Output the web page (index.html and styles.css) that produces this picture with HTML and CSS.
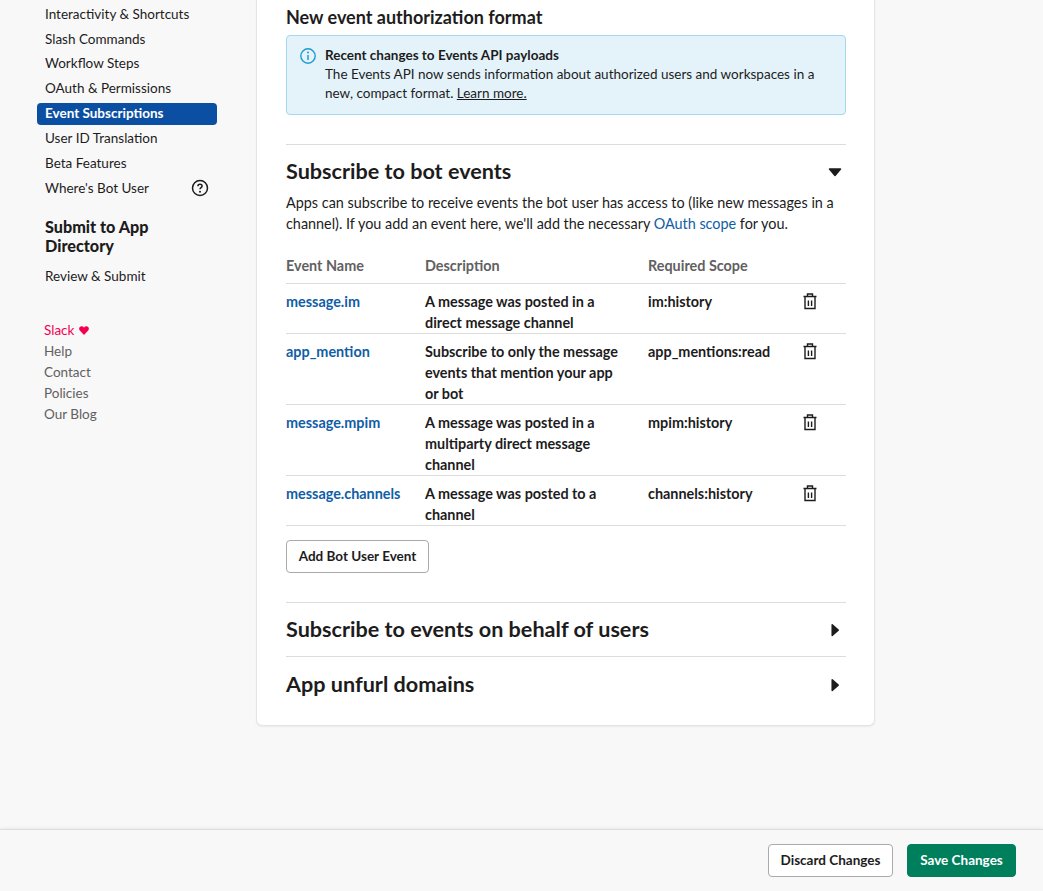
FILE: index.html
```html
<!DOCTYPE html>
<html lang="en">
<head>
  <meta charset="UTF-8" />
  <meta name="viewport" content="width=device-width, initial-scale=1.0" />
  <title>Event Subscriptions</title>
  <link rel="stylesheet" href="styles.css">
</head>
<body>
  <div class="page">
    <nav class="sidebar">
      <ul class="nav_list">
        <li><a href="#">Interactivity &amp; Shortcuts</a></li>
        <li><a href="#">Slash Commands</a></li>
        <li><a href="#">Workflow Steps</a></li>
        <li><a href="#">OAuth &amp; Permissions</a></li>
        <li><a href="#" class="active">Event Subscriptions</a></li>
        <li><a href="#">User ID Translation</a></li>
        <li><a href="#">Beta Features</a></li>
        <li>
          <a href="#" class="with_icon">Where's Bot User
            <svg class="help_icon" width="18" height="18" viewBox="0 0 18 18" fill="none" stroke="#1d1c1d">
              <circle cx="9" cy="9" r="7.5" stroke-width="1.5"/>
              <path d="M6.9 7.2C6.9 6 7.8 5.3 9 5.3s2.1.7 2.1 1.8c0 1.6-2.1 1.6-2.1 3.2" stroke-width="1.5"/>
              <circle cx="9" cy="12.7" r="1" fill="#1d1c1d" stroke="none"/>
            </svg>
          </a>
        </li>
      </ul>
      <h4 class="nav_title">Submit to App Directory</h4>
      <ul class="nav_list">
        <li><a href="#">Review &amp; Submit</a></li>
      </ul>
      <ul class="foot_links">
        <li class="slack_love">Slack
          <svg class="heart" width="10" height="9" viewBox="0 0 10 9"><path d="M5 9 .8 4.6C-.6 3 .3.3 2.6.3 3.7.3 4.5.9 5 1.7 5.5.9 6.3.3 7.4.3c2.3 0 3.2 2.7 1.8 4.3z"/></svg>
        </li>
        <li><a href="#">Help</a></li>
        <li><a href="#">Contact</a></li>
        <li><a href="#">Policies</a></li>
        <li><a href="#">Our Blog</a></li>
      </ul>
    </nav>

    <main class="card">
      <h3 class="format_title">New event authorization format</h3>
      <div class="callout">
        <svg class="info_icon" width="18" height="18" viewBox="0 0 18 18" fill="none" stroke="#1d9bd1">
          <circle cx="9" cy="9" r="7.2" stroke-width="1.4"/>
          <path d="M9 8v5" stroke-width="1.5"/>
          <circle cx="9" cy="5.4" r="1" fill="#1d9bd1" stroke="none"/>
        </svg>
        <div>
          <strong>Recent changes to Events API payloads</strong><br>
          The Events API now sends information about authorized users and workspaces in a new, compact format. <a href="#">Learn more.</a>
        </div>
      </div>

      <section class="section open">
        <div class="section_head">
          <h2>Subscribe to bot events</h2>
          <svg class="caret" width="14" height="10" viewBox="0 0 14 10"><path d="M1.5 2h11L7 8.5z"/></svg>
        </div>
        <p class="intro">Apps can subscribe to receive events the bot user has access to (like new messages in a channel). If you add an event here, we'll add the necessary <a href="#">OAuth scope</a> for you.</p>

        <table class="events">
          <thead>
            <tr>
              <th class="col_name">Event Name</th>
              <th class="col_desc">Description</th>
              <th class="col_scope">Required Scope</th>
              <th></th>
            </tr>
          </thead>
          <tbody>
            <tr>
              <td><a href="#">message.im</a></td>
              <td>A message was posted in a direct message channel</td>
              <td>im:history</td>
              <td><svg class="trash" width="14" height="17" viewBox="0 0 14 17" fill="none" stroke="#1d1c1d" stroke-width="1.4"><path d="M4.5 3V1h5v2M.5 3.5h13M2 3.5v12h10v-12M5.4 7.5V13M8.6 7.5V13"/></svg></td>
            </tr>
            <tr>
              <td><a href="#">app_mention</a></td>
              <td>Subscribe to only the message events that mention your app or bot</td>
              <td>app_mentions:read</td>
              <td><svg class="trash" width="14" height="17" viewBox="0 0 14 17" fill="none" stroke="#1d1c1d" stroke-width="1.4"><path d="M4.5 3V1h5v2M.5 3.5h13M2 3.5v12h10v-12M5.4 7.5V13M8.6 7.5V13"/></svg></td>
            </tr>
            <tr>
              <td><a href="#">message.mpim</a></td>
              <td>A message was posted in a multiparty direct message channel</td>
              <td>mpim:history</td>
              <td><svg class="trash" width="14" height="17" viewBox="0 0 14 17" fill="none" stroke="#1d1c1d" stroke-width="1.4"><path d="M4.5 3V1h5v2M.5 3.5h13M2 3.5v12h10v-12M5.4 7.5V13M8.6 7.5V13"/></svg></td>
            </tr>
            <tr>
              <td><a href="#">message.channels</a></td>
              <td>A message was posted to a channel</td>
              <td>channels:history</td>
              <td><svg class="trash" width="14" height="17" viewBox="0 0 14 17" fill="none" stroke="#1d1c1d" stroke-width="1.4"><path d="M4.5 3V1h5v2M.5 3.5h13M2 3.5v12h10v-12M5.4 7.5V13M8.6 7.5V13"/></svg></td>
            </tr>
          </tbody>
        </table>
        <button class="btn add_btn">Add Bot User Event</button>
      </section>

      <section class="section closed">
        <div class="section_head">
          <h2>Subscribe to events on behalf of users</h2>
          <svg class="caret" width="14" height="14" viewBox="0 0 14 14"><path d="M4.2 1.8v10.6l6-5.3z"/></svg>
        </div>
      </section>
      <section class="section closed last">
        <div class="section_head">
          <h2>App unfurl domains</h2>
          <svg class="caret" width="14" height="14" viewBox="0 0 14 14"><path d="M4.2 1.8v10.6l6-5.3z"/></svg>
        </div>
      </section>
    </main>
  </div>

  <footer class="save_bar">
    <button class="btn discard_btn">Discard Changes</button>
    <button class="btn save_btn">Save Changes</button>
  </footer>
</body>
</html>
```

FILE: styles.css
```css
* {
  box-sizing: border-box;
}
html, body {
  margin: 0;
  height: 100%;
}
body {
  font-family: Lato, "Liberation Sans", sans-serif;
  font-size: 14.4px;
  color: #1d1c1d;
  background-color: #f8f8f8;
  display: flex;
  flex-direction: column;
  overflow: hidden;
}
a {
  color: inherit;
  text-decoration: none;
}
ul {
  list-style: none;
  margin: 0;
  padding: 0;
}
.page {
  flex: 1;
  display: flex;
  min-height: 0;
}

/* sidebar */
.sidebar {
  width: 256px;
  flex: none;
  padding: 2.7px 0 0 37px;
  font-size: 13.5px;
}
.nav_list li {
  display: flow-root;
  width: 180px;
  margin-bottom: 2.86px;
}
.nav_list a {
  display: block;
  height: 22px;
  line-height: 22px;
  padding-left: 8px;
  border-radius: 4px;
}
.nav_list a.active {
  margin: 1px 0 -1px;
  line-height: 20px;
  background-color: #0b4fa3;
  color: #fff;
  font-weight: 700;
}
.with_icon {
  position: relative;
}
.help_icon {
  position: absolute;
  right: 8px;
  top: 2px;
}
.nav_title {
  width: 150px;
  margin: 18.3px 0 10px 8px;
  font-size: 16.2px;
  line-height: 19px;
  font-weight: 900;
}
.foot_links {
  margin: 33px 0 0 7px;
  color: #616061;
}
.foot_links li {
  height: 21px;
  line-height: 21px;
}
.slack_love {
  color: #f5004f;
}
.heart {
  fill: #f5004f;
  margin-left: 1px;
}

/* main card */
.card {
  width: 619px;
  align-self: flex-start;
  padding: 0 28px 14px 29px;
  background-color: #fff;
  border: 1px solid #e4e4e4;
  border-top: none;
  border-radius: 0 0 6px 6px;
  box-shadow: 0 1px 2px rgba(0,0,0,0.06);
}
.format_title {
  margin: 6px 0 7px;
  font-size: 18px;
  line-height: 22px;
  font-weight: 700;
}
.callout {
  display: flex;
  gap: 8px;
  height: 80px;
  padding: 10px 12px;
  font-size: 13.5px;
  line-height: 19px;
  background-color: #e4f3fa;
  border: 1px solid #a3d8ef;
  border-radius: 4px;
}
.info_icon {
  flex: none;
  margin-top: 1px;
}
.callout a {
  text-decoration: underline;
}
.section {
  border-top: 1px solid #ddd;
}
.section.open {
  margin-top: 29px;
  padding-bottom: 29px;
}
.section.last {
  padding-top: 1px;
}
.section_head {
  display: flex;
  align-items: center;
  justify-content: space-between;
  padding-right: 4px;
}
.section_head h2 {
  margin: 0;
  font-size: 21.6px;
  line-height: 53px;
  font-weight: 700;
}
.caret {
  fill: #1d1c1d;
  stroke: #1d1c1d;
  stroke-width: 1.5;
  stroke-linejoin: round;
}
.intro {
  margin: -6.5px 0 0;
  line-height: 21.5px;
}
.intro a, .events a {
  color: #0f5ea6;
}

/* events table */
.events {
  width: 100%;
  margin-top: 19.5px;
  border-collapse: collapse;
  table-layout: fixed;
  line-height: 21px;
}
.events th {
  text-align: left;
  font-weight: 700;
  color: #616061;
  padding: 1px 0 7px;
}
.col_name {
  width: 139px;
}
.col_desc {
  width: 223px;
}
.col_scope {
  width: 155px;
}
.events td {
  padding: 7px 24px 0 0;
  vertical-align: top;
  font-weight: 700;
  border-top: 1px solid #ddd;
}
.events td:last-child {
  padding-right: 0;
}
.events tbody tr:last-child td {
  border-bottom: 1px solid #ddd;
}
.trash {
  display: block;
  margin-top: 2px;
}

/* buttons */
.btn {
  font-family: inherit;
  font-size: 13.5px;
  font-weight: 700;
  height: 33px;
  padding: 0 0 2px;
  border-radius: 4px;
  background-color: #fff;
  color: #1d1c1d;
  border: 1px solid #aaa;
}
.add_btn {
  width: 143px;
  margin-top: 14px;
  display: block;
}
.save_bar {
  flex: none;
  height: 62px;
  display: flex;
  justify-content: flex-end;
  align-items: flex-start;
  gap: 14px;
  padding: 14px 27px 0 0;
  background-color: #f8f8f8;
  border-top: 1px solid #ddd;
  box-shadow: 0 -1px 3px rgba(0,0,0,0.06);
}
.discard_btn {
  width: 125px;
}
.save_btn {
  width: 109px;
  color: #fff;
  background-color: #007f5d;
  border-color: #007f5d;
}
```
